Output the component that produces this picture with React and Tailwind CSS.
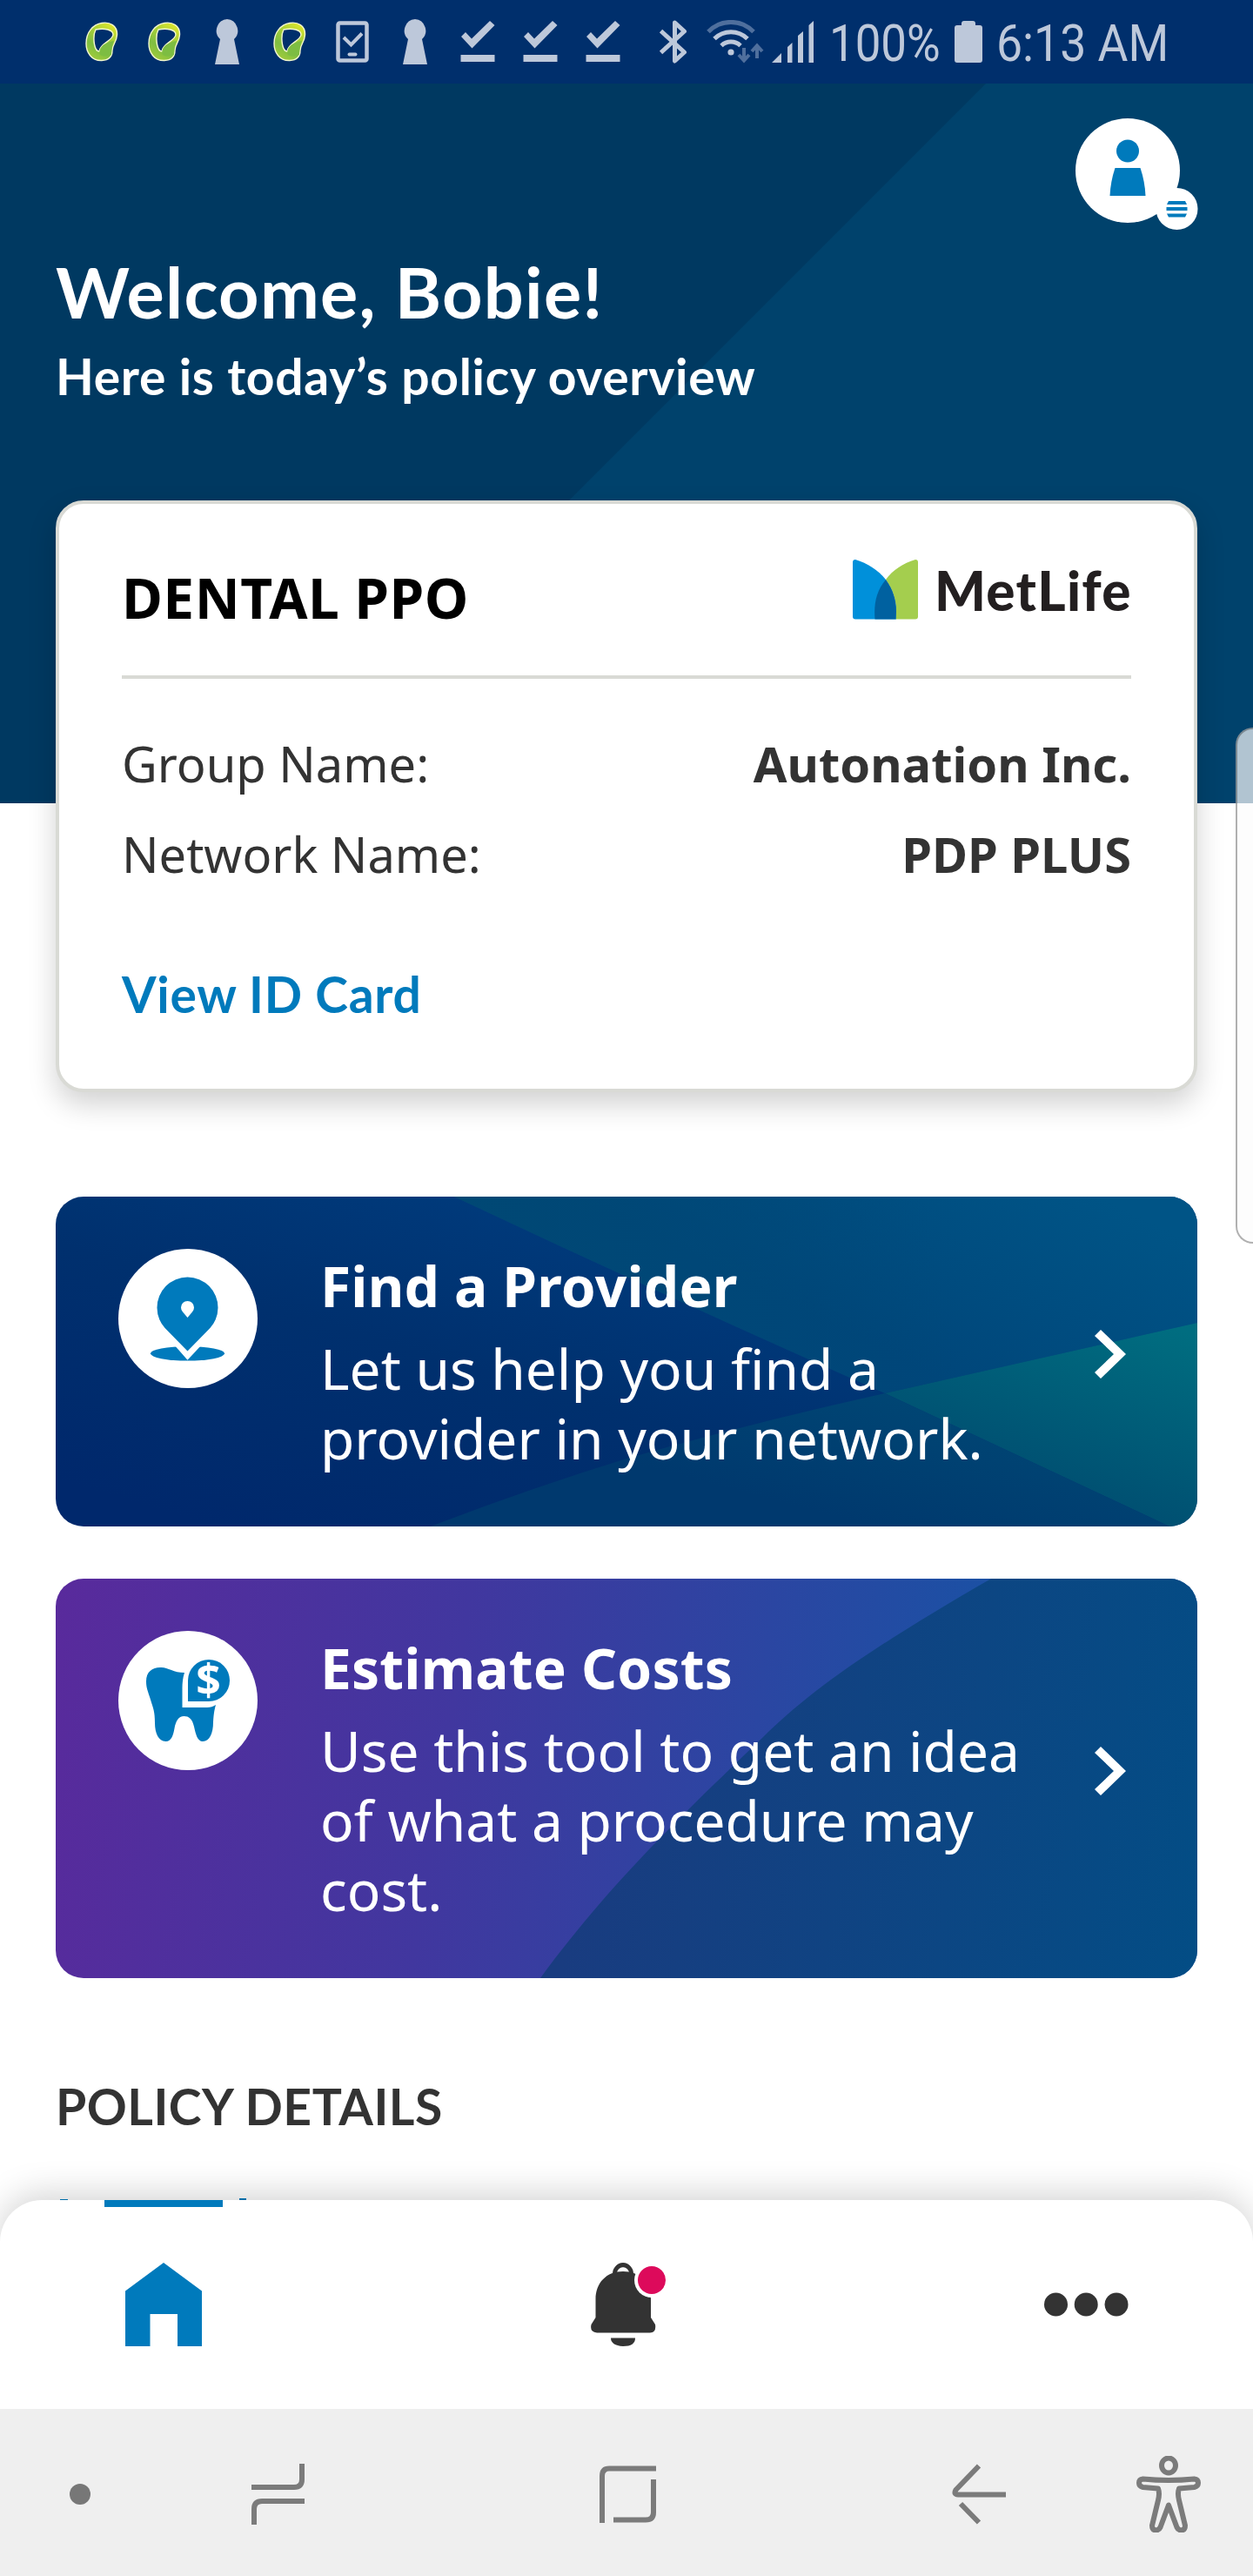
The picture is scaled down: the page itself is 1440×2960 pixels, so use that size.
import React from "react";

const BLUE = "#007abc";

function Bean() {
  return (
    <svg width="38" height="46" viewBox="0 0 38 46" fill="none">
      <defs>
        <linearGradient id="bean" x1="0.2" y1="1" x2="0.7" y2="0">
          <stop offset="0" stopColor="#a5cd39" />
          <stop offset="0.35" stopColor="#7fbe42" />
          <stop offset="0.7" stopColor="#a9d038" />
          <stop offset="1" stopColor="#dbe52d" />
        </linearGradient>
      </defs>
      <path
        fillRule="evenodd"
        d="M19 1.500C28 0 37 4 36.500 15C36 24 31 26 31 33C31 40 28 44 19 44.500C7 45 1 35 1 25C1 12 9 3 19 1.500ZM12 9C10 13 9.500 20 10.500 26C11.500 31 13 34 16 34C17 25 31 22 32 15C32 9 22 7 12 9Z"
        fill="url(#bean)"
        stroke="#f4f8cf"
        strokeWidth="1.400"
      />
      <path d="M26 24C18 27 15 32 17 38C22 41 28 39 30 38C30 32 31 26 33 22C31 22 28 23 26 24Z" fill="#7dbd42" />
    </svg>
  );
}

function Keyhole() {
  return (
    <svg width="28" height="52" viewBox="0 0 28 52" fill="#bdc8da">
      <path d="M14 0A13.300 13.300 0 0 1 22 23L28 52H0L6 23A13.300 13.300 0 0 1 14 0Z" />
    </svg>
  );
}

function PhoneCheck() {
  return (
    <svg width="38" height="48" viewBox="0 0 38 48" fill="none" stroke="#bdc8da">
      <rect x="2.500" y="2.500" width="33" height="43" rx="2" strokeWidth="4.500" />
      <path d="M9 19L17.500 27.500L30 14.500" strokeWidth="4" />
      <path d="M15.500 38.500H22.500" strokeWidth="4" strokeLinecap="round" />
    </svg>
  );
}

function CheckLine() {
  return (
    <svg width="40" height="48" viewBox="0 0 40 48" fill="#bdc8da">
      <path d="M1 18L6 13L13 20.500L34 0L39.500 5L13.500 31.500Z" />
      <rect x="0.500" y="39" width="39" height="8" />
    </svg>
  );
}

const statusIcons = [Bean, Bean, Keyhole, Bean, PhoneCheck, Keyhole, CheckLine, CheckLine, CheckLine];

function StatusBar() {
  return (
    <div className="flex h-24 items-center bg-[#002f6c] pl-[81px] text-[#bdc8da]">
      {statusIcons.map((Icon, i) => (
        <div key={i} className="flex w-[72px] shrink-0 justify-center">
          <Icon />
        </div>
      ))}
      <svg className="ml-[29px] shrink-0" width="32" height="50" viewBox="0 0 32 50" fill="none" stroke="#bdc8da" strokeWidth="5" strokeLinejoin="round">
        <path d="M1.500 12.500L28.500 37L17.500 47V3L28.500 13L1.500 37.500" />
      </svg>
      <svg className="ml-[22px] shrink-0" width="66" height="50" viewBox="0 0 66 50" fill="none" stroke="#bdc8da" strokeWidth="5">
        <path d="M2 13.500A36 36 0 0 1 54 13.500" stroke="#4f6f9d" />
        <path d="M9 21.500A27 27 0 0 1 47 21.500" />
        <path d="M17 29.500A16 16 0 0 1 39 29.500" />
        <circle cx="28" cy="37" r="3.600" fill="#bdc8da" stroke="none" />
        <g stroke="#4f6f9d" strokeWidth="4">
          <path d="M43 32V47M37 40L43 46.500L49 40" />
          <path d="M58 44V29M52 36L58 29.500L64 36" />
        </g>
      </svg>
      <svg className="ml-[9px] shrink-0" width="50" height="48" viewBox="0 0 50 48" fill="#bdc8da">
        <path d="M0 48L11 37V48ZM18 48V30L23.500 25V48ZM30 48V17L36 12V48ZM42.500 48V5L48 0V48Z" />
      </svg>
      <div className="ml-4 w-[138px] shrink-0 whitespace-nowrap font-['Roboto',sans-serif] text-[60px] leading-[96px]">
        <span className="inline-block origin-left scale-x-[0.88] pt-[4px]">100%</span>
      </div>
      <svg className="ml-[6px] shrink-0" width="32" height="48" viewBox="0 0 32 48" fill="#bdc8da">
        <path d="M8 5V3Q8 0 11 0H21Q24 0 24 3V5H29Q32 5 32 8V45Q32 48 29 48H3Q0 48 0 45V8Q0 5 3 5Z" />
      </svg>
      <div className="ml-4 w-[200px] shrink-0 whitespace-nowrap font-['Roboto',sans-serif] text-[60px] leading-[96px]">
        <span className="inline-block origin-left scale-x-[0.893] pt-[4px]">6:13 AM</span>
      </div>
    </div>
  );
}

function Header() {
  return (
    <header className="relative h-[827px] bg-[#00426c] px-16 pt-10">
      <svg className="absolute inset-0" width="1440" height="827" viewBox="0 0 1440 827">
        <path d="M0 0H1133L306 827H0Z" fill="#003961" />
      </svg>
      <div className="relative flex h-[120px] justify-end">
        <svg className="mr-[-1px]" width="141" height="130" viewBox="0 0 141 130">
          <circle cx="60" cy="60" r="60" fill="#fff" />
          <circle cx="116.500" cy="104" r="24" fill="#fff" />
          <circle cx="60" cy="37.500" r="13" fill={BLUE} />
          <path d="M45.500 57H74.500C78 67 80 78 80.500 89H39.500C40 78 42 67 45.500 57Z" fill={BLUE} />
          <path d="M107 95H126L128 99H105ZM104.500 102H128.500V106H104.500ZM105 109.500H128L126 113.500H107Z" fill={BLUE} />
        </svg>
      </div>
      <h1 className="relative mt-[31px] whitespace-nowrap font-['Lato',sans-serif] text-[81px] leading-[96px] font-bold tracking-[1.3px] text-white">
        Welcome, Bobie!
      </h1>
      <p className="relative mt-4 whitespace-nowrap font-['Lato',sans-serif] text-[57px] leading-[67px] font-bold tracking-[0.7px] text-white">
        Here is today’s policy overview
      </p>
    </header>
  );
}

function MetLifeLogo() {
  return (
    <div className="flex items-start">
      <svg className="mt-[-4px] shrink-0" width="75" height="69" viewBox="0 0 75 69">
        <path d="M3 0C17 4 29 12 38 23C46 34 50 46 50 60V68.500H3Q0 68.500 0 65.500V3Q0 0 3 0Z" fill="#0090da" />
        <path d="M72 0C58 4 46 12 38 23C46 34 50 46 50 60L49.500 68.500H72Q75 68.500 75 65.500V3Q75 0 72 0Z" fill="#a4ce4e" />
        <path d="M38 23C46 34 50 46 50 60L49.500 68.500H25.500C24 51 27 36 38 23Z" fill="#0061a0" />
      </svg>
      <div className="mt-[-4px] ml-[19px] w-[226px] whitespace-nowrap font-['Lato',sans-serif] text-[62px] leading-[70px] font-black tracking-[1.3px] text-[#231f20]">
        MetLife
      </div>
    </div>
  );
}

function PolicyCard() {
  return (
    <section className="relative mx-16 -mt-[348px] h-[680px] rounded-[32px] border-4 border-[#d9dad5] bg-white px-[72px] font-['Noto_Sans',sans-serif] text-[#333] shadow-[0_14px_32px_rgba(0,0,0,0.18)]">
      <div className="flex h-[201px] justify-between border-b-4 border-[#d9dad5] pt-[68px]">
        <h2 className="text-[64px] leading-[80px] font-bold tracking-[0.5px] whitespace-nowrap text-black">DENTAL PPO</h2>
        <MetLifeLogo />
      </div>
      <dl className="mt-[57px] flex flex-col gap-6 text-[56px] leading-[80px]">
        <div className="flex justify-between">
          <dt>Group Name:</dt>
          <dd className="font-bold">Autonation Inc.</dd>
        </div>
        <div className="flex justify-between">
          <dt>Network Name:</dt>
          <dd className="font-bold">PDP PLUS</dd>
        </div>
      </dl>
      <a className="mt-[81px] block font-['Lato',sans-serif] text-[57px] leading-[80px] font-bold tracking-[0.7px] text-[#007abc]">View ID Card</a>
    </section>
  );
}

function Chevron() {
  return (
    <svg className="absolute top-1/2 right-[82px] mt-[-37px]" width="36" height="56" viewBox="0 0 36 56">
      <path d="M0 7L7 0L36 28L7 56L0 49L22 28Z" fill="#fff" />
    </svg>
  );
}

function ActionCard({ art, icon, title, children }) {
  return (
    <section className="relative overflow-hidden rounded-[32px] pt-[63px] pb-[61px] pl-[72px] text-white">
      {art}
      <div className="relative flex">
        <div className="mt-[-3px] mr-[72px] h-40 w-40 shrink-0">{icon}</div>
        <div className="font-['Noto_Sans',sans-serif] text-[64px] leading-[80px]">
          <h3 className="font-bold tracking-[0.2px]">{title}</h3>
          <p className="mt-[15px] whitespace-nowrap">{children}</p>
        </div>
      </div>
      <Chevron />
    </section>
  );
}

const providerArt = (
  <svg className="absolute inset-0" width="1312" height="379" viewBox="0 0 1312 379">
    <defs>
      <linearGradient id="pl" gradientUnits="userSpaceOnUse" x1="330" y1="-120" x2="180" y2="379">
        <stop offset="0" stopColor="#003e80" />
        <stop offset="0.5" stopColor="#00306e" />
        <stop offset="1" stopColor="#00286c" />
      </linearGradient>
      <linearGradient id="pt" gradientUnits="userSpaceOnUse" x1="1200" y1="0" x2="1080" y2="240">
        <stop offset="0" stopColor="#005486" />
        <stop offset="1" stopColor="#00467a" />
      </linearGradient>
      <linearGradient id="pt2" gradientUnits="userSpaceOnUse" x1="458" y1="100" x2="1000" y2="0">
        <stop offset="0" stopColor="#004874" />
        <stop offset="1" stopColor="#004874" stopOpacity="0" />
      </linearGradient>
      <linearGradient id="pr" gradientUnits="userSpaceOnUse" x1="1280" y1="150" x2="1200" y2="379">
        <stop offset="0" stopColor="#006d80" />
        <stop offset="1" stopColor="#004c70" />
      </linearGradient>
      <linearGradient id="pb" gradientUnits="userSpaceOnUse" x1="980" y1="226" x2="940" y2="379">
        <stop offset="0" stopColor="#004674" />
        <stop offset="1" stopColor="#00396e" />
      </linearGradient>
    </defs>
    <rect width="1312" height="379" fill="url(#pl)" />
    <path d="M458 0Q700 114 953 226Q1130 186 1312 145V0Z" fill="url(#pt)" />
    <path d="M458 0Q700 114 953 226Q1130 186 1312 145V0Z" fill="url(#pt2)" />
    <path d="M953 226Q1130 186 1312 145V379H1280Q1120 304 953 226Z" fill="url(#pr)" />
    <path d="M431 379Q540 337 656 301Q800 260 953 226Q1120 304 1280 379Z" fill="url(#pb)" />
  </svg>
);

const costArt = (
  <svg className="absolute inset-0" width="1312" height="459" viewBox="0 0 1312 459">
    <defs>
      <linearGradient id="cl" gradientUnits="userSpaceOnUse" x1="0" y1="0" x2="1040" y2="160">
        <stop offset="0" stopColor="#592a9c" />
        <stop offset="0.45" stopColor="#41379f" />
        <stop offset="1" stopColor="#1c50a4" />
      </linearGradient>
      <linearGradient id="cr" gradientUnits="userSpaceOnUse" x1="600" y1="330" x2="1312" y2="440">
        <stop offset="0" stopColor="#193c80" />
        <stop offset="1" stopColor="#034d85" />
      </linearGradient>
    </defs>
    <rect width="1312" height="459" fill="url(#cl)" />
    <path d="M1075 0C940 78 870 126 812 183C700 290 630 360 557 459H1312V0Z" fill="url(#cr)" />
  </svg>
);

const pinIcon = (
  <svg width="160" height="160" viewBox="0 0 160 160">
    <circle cx="80" cy="80" r="80" fill="#fff" />
    <ellipse cx="79.500" cy="120.300" rx="42.500" ry="8.300" fill={BLUE} />
    <path d="M63 109L79.500 127.700L97 109L79.500 100Z" fill="#fff" />
    <path d="M79.500 117.500L55 92.500A35 35 0 1 1 104 92.500Z" fill={BLUE} />
    <path d="M79.500 79L74 72.500A7.500 7.500 0 1 1 85 72.500Z" fill="#fff" />
  </svg>
);

const toothIcon = (
  <svg width="160" height="160" viewBox="0 0 160 160">
    <circle cx="80" cy="80" r="80" fill="#fff" />
    <path
      d="M48 42C56 41 63 48 76 48C74 54 73.500 60 73.500 66V88H102C106 88 109 87 112 85C110 92 109.500 97 109 105C109 117 105 127 97 127C91 127 89 119 87 110C85 101 81 98 75.500 98C69 98 66 104 64.500 112C63 120 61 127 54.500 127C46 127 42 117 42 106C42 92 40 89 37 79C34 69 32 66 32 58C32 47 39 42 48 42Z"
      fill={BLUE}
    />
    <path d="M104 33A24 24 0 1 1 104 81H80V57A24 24 0 0 1 104 33Z" fill={BLUE} />
    <text x="103.500" y="74" textAnchor="middle" fontFamily="Noto Sans, sans-serif" fontWeight="700" fontSize="50" fill="#fff">
      $
    </text>
  </svg>
);

function TabBar() {
  return (
    <nav className="relative flex h-60 items-start rounded-t-[48px] bg-white shadow-[0_-6px_40px_rgba(0,0,0,0.18)]">
      <div className="ml-[120px] flex w-[136px] flex-col items-center">
        <div className="h-2 w-full bg-[#007abc]" />
        <svg className="mt-16" width="88" height="96" viewBox="0 0 88 96">
          <path d="M44 0L88 32.500V96H60V59H28.500V96H0V32.500Z" fill={BLUE} />
        </svg>
      </div>
      <svg className="mt-[72px] ml-[423px]" width="90" height="96" viewBox="0 0 90 96">
        <path d="M37 2.500A10 10 0 0 0 27.500 12.500L28 15H47L46.500 12.500A10 10 0 0 0 37 2.500Z" fill="none" stroke="#333" strokeWidth="5" />
        <path d="M37 10C56 10 69 23 69 42V63L74 71Q75.500 80 68 80.500H7Q-1.500 80 0.500 71L5.500 63V42C5.500 23 18 10 37 10Z" fill="#333" />
        <path d="M23 86.500H51Q51 96 37 96Q23 95 23 86.500Z" fill="#333" />
        <circle cx="70" cy="20" r="20" fill="#fff" />
        <circle cx="70" cy="20" r="16" fill="#dd0a5b" />
      </svg>
      <svg className="mt-[106px] ml-[431px]" width="97" height="28" viewBox="0 0 97 28" fill="#333">
        <circle cx="13.500" cy="14" r="13.500" />
        <circle cx="48.200" cy="14" r="13.500" />
        <circle cx="83" cy="14" r="13.500" />
      </svg>
    </nav>
  );
}

function SystemBar() {
  return (
    <div className="relative flex h-48 items-center bg-[#efefef] pt-1">
      <div className="ml-20 h-6 w-6 rounded-full bg-[#777]" />
      <svg className="ml-[185px]" width="61" height="70" viewBox="0 0 61 70" fill="none" stroke="#7b7b7b" strokeWidth="6">
        <path d="M58 0V18Q58 27 49 27H0M61 43H12Q3 43 3 52V70" />
      </svg>
      <svg className="ml-[339px]" width="65" height="66" viewBox="0 0 65 66" fill="none" stroke="#7b7b7b" strokeWidth="6">
        <path d="M65 3.500H11Q3 3.500 3 12V66M16 62.500H53Q62 62.500 62 54V16" />
      </svg>
      <svg className="ml-[340px]" width="62" height="70" viewBox="0 0 62 70" fill="none" stroke="#7b7b7b" strokeWidth="6">
        <path d="M31 2.500L4.500 30Q1.500 35.500 7 35.500H62M10 46L31 67.500" />
      </svg>
      <svg className="ml-[150px]" width="74" height="88" viewBox="0 0 74 88" fill="none" stroke="#7b7b7b" strokeWidth="6" strokeLinejoin="round">
        <ellipse cx="37" cy="11" rx="8" ry="8.500" />
        <path d="M7.500 26.500Q37 29.500 66.500 26.500Q71 27 71 31Q71 35 66.500 36L49 37.500Q47 43 49 51L56 80Q56 85 52 85.500Q48 85.500 46.500 82L37 56.500L27.500 82Q26 85.500 22 85.500Q18 85 18 80L25 51Q27 43 25 37.500L7.500 36Q3 35 3 31Q3 27 7.500 26.500Z" />
      </svg>
    </div>
  );
}

export default function App() {
  return (
    <div className="relative h-[2960px] w-[1440px] overflow-hidden bg-white">
      <StatusBar />
      <main className="h-[2432px] overflow-hidden">
        <Header />
        <PolicyCard />
        <div className="mx-16 mt-[120px] flex flex-col gap-[60px]">
          <ActionCard art={providerArt} icon={pinIcon} title="Find a Provider">
            Let us help you find a
            <br />
            provider in your network.
          </ActionCard>
          <ActionCard art={costArt} icon={toothIcon} title="Estimate Costs">
            Use this tool to get an idea
            <br />
            of what a procedure may
            <br />
            cost.
          </ActionCard>
        </div>
        <h2 className="mx-16 mt-[107px] font-['Lato',sans-serif] text-[57px] leading-[80px] font-bold tracking-[0.5px] text-[#333]">
          POLICY DETAILS
        </h2>
        <div className="mt-[66px] flex items-end pl-[69px]">
          <div className="h-[1px] w-[9px] bg-[#007abc]" />
          <div className="ml-[197px] h-[2px] w-2 bg-[#007abc]" />
        </div>
      </main>
      <TabBar />
      <SystemBar />
      {/* Edge-panel handle */}
      <div className="absolute top-[836px] right-[-20px] h-[593px] w-[40px] rounded-[20px] border-2 border-black/30 bg-[#fcfcfc]/70" />
    </div>
  );
}
